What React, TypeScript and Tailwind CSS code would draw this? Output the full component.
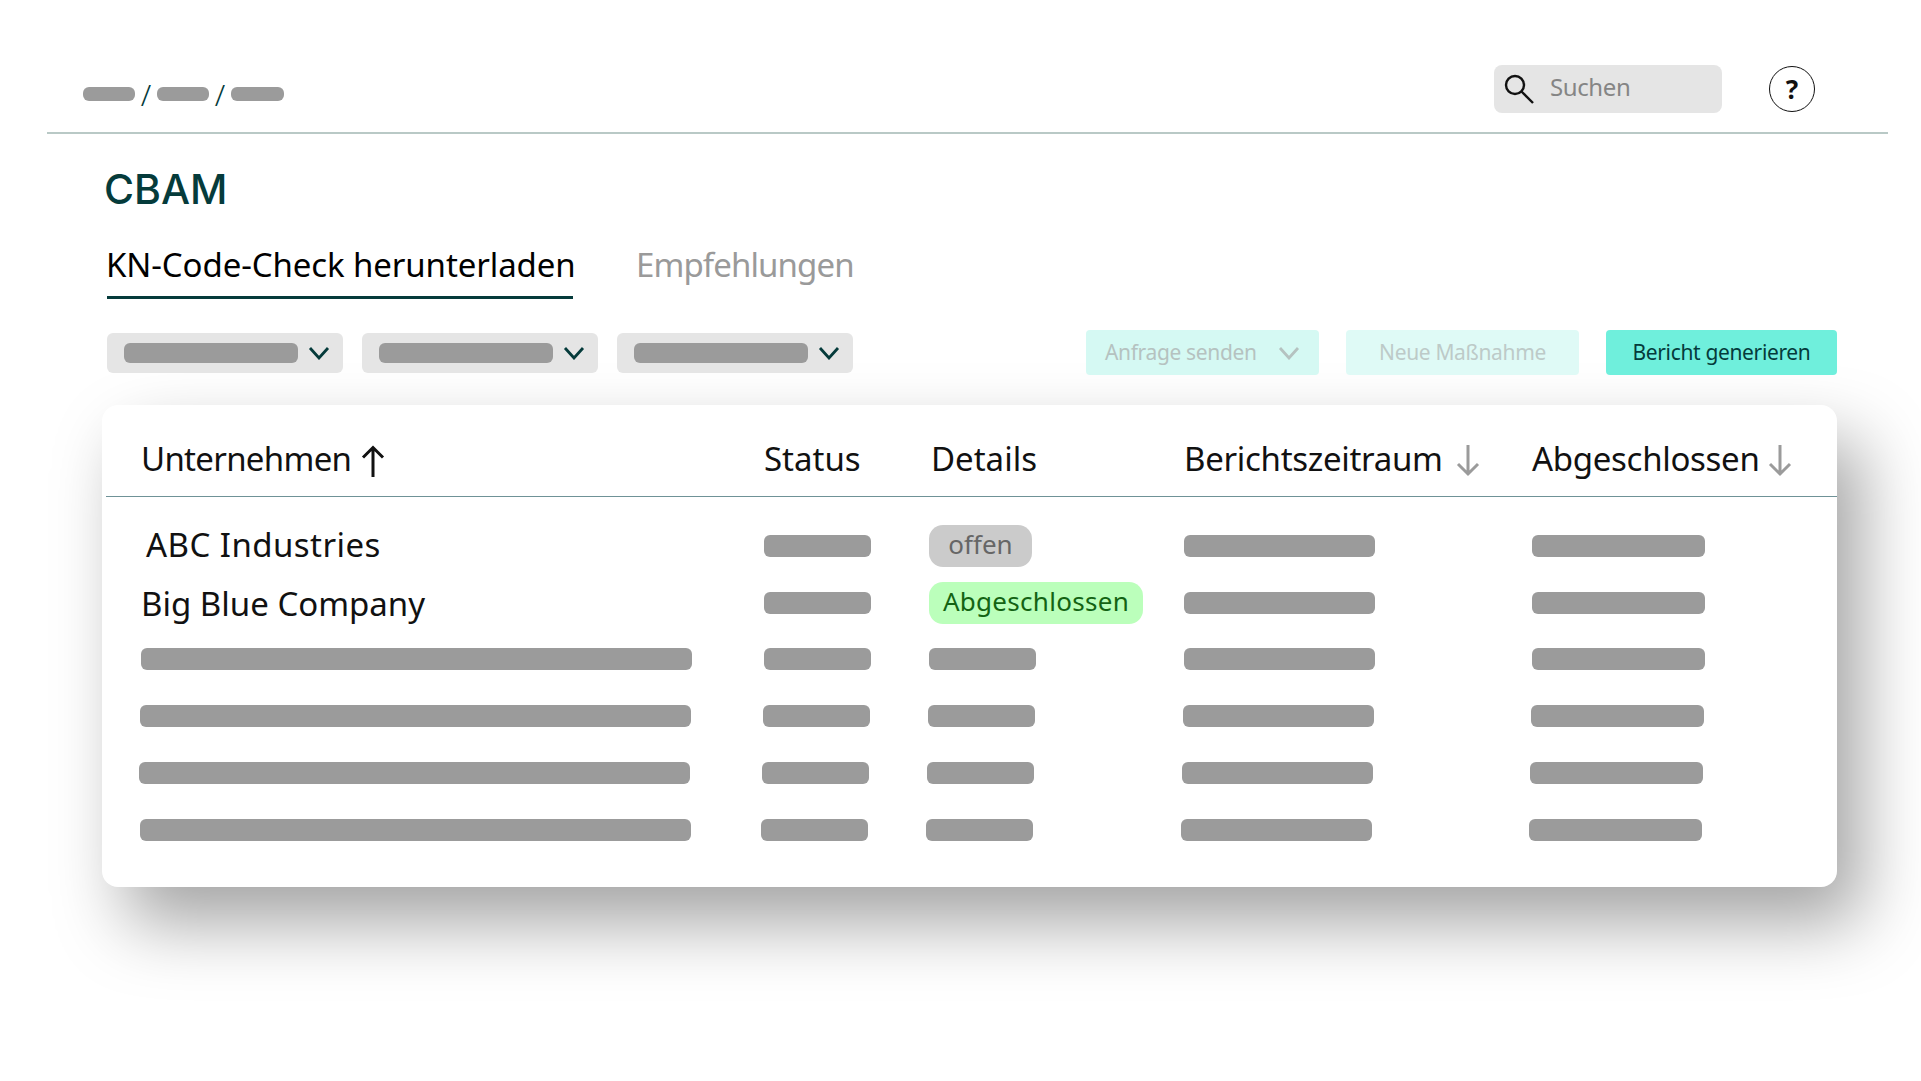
const sans = "font-['Noto_Sans',sans-serif]"
const tableCols = 'grid grid-cols-[621px_165px_255px_348px_auto]'

function Bar({ className }: { className: string }) {
  return <div className={`bg-[#9b9b9b] rounded-[6px] ${className}`} />
}

function Chevron({ className }: { className: string }) {
  return (
    <svg viewBox="0 0 22 14" fill="none" stroke="currentColor" strokeWidth="2.8" className={className}>
      <path d="M2 2l9 10 9-10" />
    </svg>
  )
}

function ArrowUp({ className }: { className: string }) {
  return (
    <svg viewBox="0 0 24 32" fill="none" stroke="currentColor" strokeWidth="3" className={className}>
      <path d="M12 32V2.5M2 12.5l10-10 10 10" />
    </svg>
  )
}

function ArrowDown({ className }: { className: string }) {
  return (
    <svg viewBox="0 0 24 32" fill="none" stroke="currentColor" strokeWidth="3" className={className}>
      <path d="M12 0v29M2 19l10 10 10-10" />
    </svg>
  )
}

function FilterSelect() {
  return (
    <div className="w-[236px] h-[40px] bg-[#e5e5e5] rounded-[6px] flex items-center pl-[17px]">
      <Bar className="w-[174px] h-[20px]" />
      <Chevron className="w-[22px] h-[14px] ml-[10px] text-[#053b3b]" />
    </div>
  )
}

const skeletonRows = [
  { row: 'mt-[24px] ml-[41px]', name: 'ml-[-2px]' },
  { row: 'mt-[35px] ml-[40px]', name: 'ml-[-2px]' },
  { row: 'mt-[35px] ml-[39px]', name: 'ml-[-2px]' },
  { row: 'mt-[35px] ml-[38px]', name: 'ml-0' },
]

export default function App() {
  return (
    <div className={`w-[1921px] h-[1081px] bg-white overflow-hidden ${sans}`}>
      {/* Top bar */}
      <header className="ml-[47px] w-[1841px] h-[134px] border-b-2 border-[#b9c9c6] flex items-start">
        <nav className="ml-[36px] mt-[87px] flex items-center gap-[6.5px] h-[14px] text-[#053b3b] text-[30px] font-light">
          <Bar className="w-[52px] h-[14px]" />
          <span className="w-[9px] flex justify-center">/</span>
          <Bar className="w-[52px] h-[14px]" />
          <span className="w-[9px] flex justify-center">/</span>
          <Bar className="w-[53px] h-[14px]" />
        </nav>
        <div className="ml-auto mt-[65px] flex items-start">
          <div className="w-[228px] h-[48px] bg-[#e5e5e5] rounded-[8px] flex items-center pl-[10px] pb-[4px]">
            <svg viewBox="0 0 30 30" fill="none" stroke="#111" strokeWidth="2.4" className="w-[30px] h-[30px] mt-[3px]">
              <circle cx="11" cy="11" r="9" />
              <path d="M17.5 17.5L29 29" />
            </svg>
            <span className="ml-[16px] text-[24px] tracking-[-0.4px] text-[#858585]">Suchen</span>
          </div>
          <div className="ml-[47px] mr-[73px] mt-[1px] w-[46px] h-[46px] rounded-full border-[1.5px] border-[#111] flex items-center justify-center text-[26px] font-bold text-[#111]">
            ?
          </div>
        </div>
      </header>

      <main className="ml-[102px] w-[1735px]">
        <h1 className="ml-[2px] mt-[27px] h-[56px] font-['Inter',sans-serif] text-[41px] leading-[56px] font-medium text-[#053b3b]">
          CBAM
        </h1>

        {/* Tabs */}
        <div className="ml-[5px] mt-[13px] flex gap-[63px] text-[33px] leading-[70px]">
          <div className="h-[69px] border-b-[3px] border-[#053b3b] w-[466px] whitespace-nowrap text-black">
            <span className="ml-[-1px] tracking-[-0.1px]">KN-Code-Check herunterladen</span>
          </div>
          <div className="text-[#9a9a9a] tracking-[-0.9px]">Empfehlungen</div>
        </div>

        {/* Filters and actions */}
        <div className="mt-[30px] ml-[5px] flex items-center h-[45px]">
          <div className="flex gap-[19px]">
            <FilterSelect />
            <FilterSelect />
            <FilterSelect />
          </div>
          <div className="ml-[233px] flex gap-[27px] text-[21px] tracking-[-0.35px]">
            <div className="w-[233px] h-[45px] bg-[#d5f9f3] rounded-[4px] flex items-center pl-[19px] text-[#b5c2c0]">
              Anfrage senden
              <Chevron className="w-[22px] h-[14px] ml-auto mr-[19px] text-[#b5c2c0]" />
            </div>
            <div className="w-[233px] h-[45px] bg-[#dffaf6] rounded-[4px] flex items-center justify-center text-[#bdcac8]">
              Neue Maßnahme
            </div>
            <div className="w-[231px] h-[45px] bg-[#6fefdc] rounded-[4px] flex items-center justify-center text-[#053b3b]">
              Bericht generieren
            </div>
          </div>
        </div>

        {/* Table card */}
        <section className="mt-[30px] h-[482px] bg-white rounded-[16px] shadow-[24px_36px_70px_rgba(0,0,0,0.36)]">
          <div className={`ml-[4px] h-[92px] border-b border-[#6f9297] ${tableCols} pl-[37px] pt-[32px] text-[33px] leading-[44px] text-[#111]`}>
            <div className="flex items-start">
              <span className="ml-[-2px] tracking-[-0.7px]">Unternehmen</span>
              <ArrowUp className="ml-[10px] mt-[8px] w-[24px] h-[32px] text-[#111]" />
            </div>
            <div>Status</div>
            <div className="ml-[2px]">Details</div>
            <div className="flex items-start">
              <span className="tracking-[-0.3px]">Berichtszeitraum</span>
              <ArrowDown className="ml-[13px] mt-[8px] w-[24px] h-[32px] text-[#9b9b9b]" />
            </div>
            <div className="flex items-start">
              <span className="tracking-[-0.3px]">Abgeschlossen</span>
              <ArrowDown className="ml-[8px] mt-[8px] w-[24px] h-[32px] text-[#9b9b9b]" />
            </div>
          </div>

          <div className={`${tableCols} ml-[41px] mt-[28px] items-center h-[42px]`}>
            <div className="ml-[3px] translate-y-[-1px] text-[33px] leading-[42px] tracking-[0.45px] text-[#111] whitespace-nowrap">ABC Industries</div>
            <Bar className="w-[107px] h-[22px]" />
            <div className="w-[103px] h-[42px] rounded-[14px] bg-[#cbcbcb] flex items-center justify-center text-[26px] leading-[42px] pb-[4px] text-[#666]">
              offen
            </div>
            <Bar className="w-[191px] h-[22px]" />
            <Bar className="w-[173px] h-[22px]" />
          </div>

          <div className={`${tableCols} ml-[41px] mt-[15px] items-center h-[42px]`}>
            <div className="ml-[-2px] translate-y-[1px] text-[33px] leading-[42px] text-[#111] whitespace-nowrap">Big Blue Company</div>
            <Bar className="w-[107px] h-[22px]" />
            <div className="w-[214px] h-[42px] rounded-[14px] bg-[#bbffbb] flex items-center justify-center text-[26px] leading-[42px] pb-[4px] tracking-[0.3px] text-[#136313]">
              Abgeschlossen
            </div>
            <Bar className="w-[191px] h-[22px]" />
            <Bar className="w-[173px] h-[22px]" />
          </div>

          {skeletonRows.map((item, i) => (
            <div key={i} className={`${tableCols} ${item.row}`}>
              <Bar className={`w-[551px] h-[22px] ${item.name}`} />
              <Bar className="w-[107px] h-[22px]" />
              <Bar className="w-[107px] h-[22px]" />
              <Bar className="w-[191px] h-[22px]" />
              <Bar className="w-[173px] h-[22px]" />
            </div>
          ))}
        </section>
      </main>
    </div>
  )
}
